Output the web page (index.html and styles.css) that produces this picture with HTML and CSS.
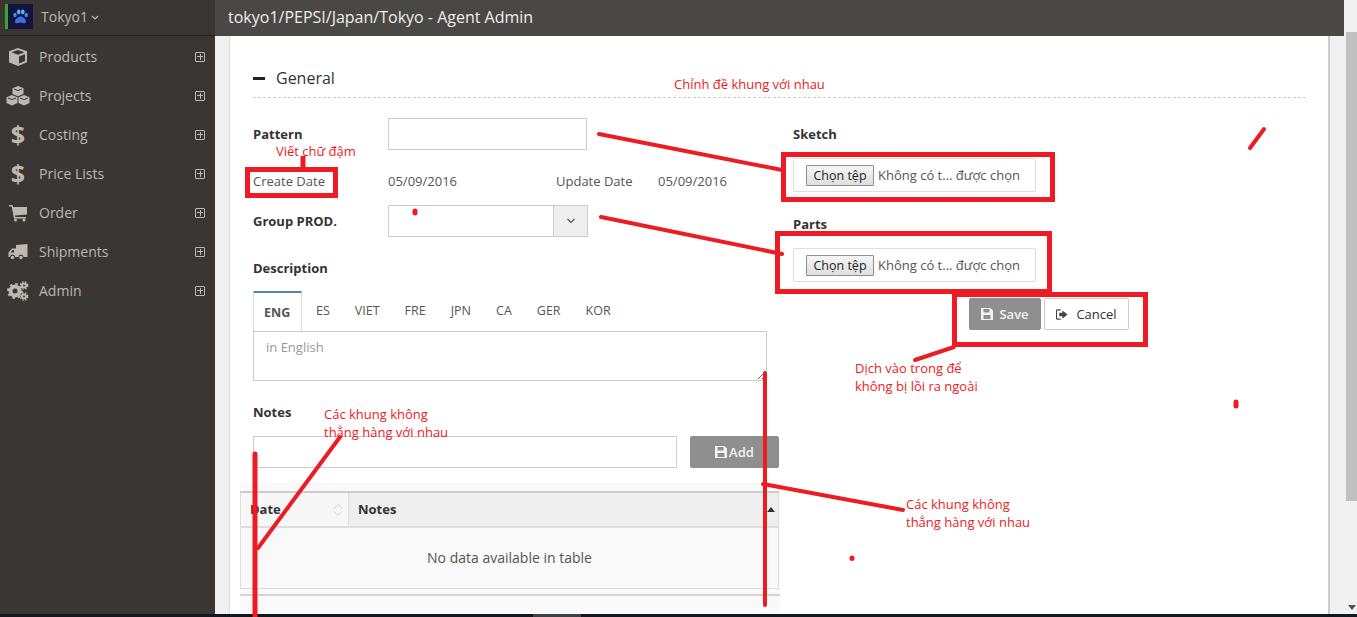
FILE: index.html
```html
<!DOCTYPE html>
<html lang="en">

<head>
    <meta charset="UTF-8">
    <meta name="viewport" content="width=device-width, initial-scale=1.0">
    <title>Agent Admin</title>
    <link rel="stylesheet" href="styles.css">
</head>

<body>
    <div id="window">
        <div id="app">
            <aside id="sidebar">
                <div class="brand">
                    <span class="brand-bar"></span>
                    <span class="brand-logo">
                        <svg viewBox="0 0 25 25" width="25" height="25">
                            <rect width="25" height="25" fill="#14123f"/>
                            <path d="M12.500 12.500c-2.500 0-5.500 2.800-5.500 5 0 1.800 1.500 2 2.800 1.700 1-.2 1.800-.6 2.700-.6s1.700.4 2.700.6c1.300.3 2.800.1 2.800-1.700 0-2.200-3-5-5.500-5z" fill="#3a6fe0"/>
                            <ellipse cx="7" cy="11" rx="1.700" ry="2.200" fill="#3f8fe8"/>
                            <ellipse cx="10.700" cy="8" rx="1.800" ry="2.400" fill="#57b4ef"/>
                            <ellipse cx="14.800" cy="8" rx="1.800" ry="2.400" fill="#57b4ef"/>
                            <ellipse cx="18.200" cy="11" rx="1.700" ry="2.200" fill="#3f8fe8"/>
                        </svg>
                    </span>
                    <span class="brand-name">Tokyo1</span>
                    <svg class="brand-caret" viewBox="0 0 8 5" width="8" height="5"><path d="M1 1l3 3 3-3" fill="none" stroke="#bdb8b2" stroke-width="1.200"/></svg>
                </div>
                <nav class="nav">
                    <a class="nav-item">
                        <span class="nav-icon">
                            <svg viewBox="0 0 20 20" width="20" height="20"><path d="M10 1l9 3.200v11L10 19l-9-3.800v-11zM3.500 5.200L10 7.800l6.500-2.600L10 3zM11 9.500v7l6-2.600V7.200z" fill="#bdb8b2" fill-rule="evenodd"/></svg>
                        </span>
                        <span class="nav-label">Products</span>
                        <span class="nav-plus"></span>
                    </a>
                    <a class="nav-item">
                        <span class="nav-icon">
                            <svg viewBox="0 0 24 20" width="24" height="20"><path d="M12 0l5.500 2.200V8L12 10.300 6.500 8V2.200zM6 9l5.500 2.200V17L6 19.500.500 17v-5.800zM18 9l5.500 2.200V17L18 19.500 12.500 17v-5.800z" fill="#bdb8b2"/><path d="M8 3l4 1.600L16 3M2 12l4 1.600 4-1.600M14 12l4 1.600 4-1.600" fill="none" stroke="#3a3633"/></svg>
                        </span>
                        <span class="nav-label">Projects</span>
                        <span class="nav-plus"></span>
                    </a>
                    <a class="nav-item">
                        <span class="nav-icon nav-dollar">$</span>
                        <span class="nav-label">Costing</span>
                        <span class="nav-plus"></span>
                    </a>
                    <a class="nav-item">
                        <span class="nav-icon nav-dollar">$</span>
                        <span class="nav-label">Price Lists</span>
                        <span class="nav-plus"></span>
                    </a>
                    <a class="nav-item">
                        <span class="nav-icon">
                            <svg viewBox="0 0 20 18" width="20" height="18"><path d="M1 1h3.500l.7 2H19v7.500L7 11.500l.3 1.500H18v1.500H6L3.600 2.500H1z" fill="#bdb8b2"/><circle cx="7.500" cy="16" r="1.500" fill="#bdb8b2"/><circle cx="16" cy="16" r="1.500" fill="#bdb8b2"/></svg>
                        </span>
                        <span class="nav-label">Order</span>
                        <span class="nav-plus"></span>
                    </a>
                    <a class="nav-item">
                        <span class="nav-icon">
                            <svg viewBox="0 0 20 16" width="20" height="16"><path d="M8 1l11-1q.5 0 .5.5V13h-4a2.500 2.500 0 0 0-5 0H7a2.500 2.500 0 0 0-5 0H.500V8.500L4 4.500h4zM2.500 8.500H6V6H4.500z" fill="#bdb8b2" fill-rule="evenodd"/><circle cx="4.500" cy="13.500" r="1.700" fill="#bdb8b2"/><circle cx="13" cy="13.500" r="1.700" fill="#bdb8b2"/></svg>
                        </span>
                        <span class="nav-label">Shipments</span>
                        <span class="nav-plus"></span>
                    </a>
                    <a class="nav-item">
                        <span class="nav-icon">
                            <svg viewBox="0 0 22 20" width="22" height="20">
                                <circle cx="8" cy="10" r="4.500" fill="none" stroke="#bdb8b2" stroke-width="4"/>
                                <circle cx="8" cy="10" r="7" fill="none" stroke="#bdb8b2" stroke-width="2" stroke-dasharray="2.500 3"/>
                                <circle cx="17" cy="4.500" r="2" fill="none" stroke="#bdb8b2" stroke-width="2"/>
                                <circle cx="17" cy="4.500" r="3.700" fill="none" stroke="#bdb8b2" stroke-width="1.400" stroke-dasharray="1.500 1.500"/>
                                <circle cx="17" cy="15.500" r="2" fill="none" stroke="#bdb8b2" stroke-width="2"/>
                                <circle cx="17" cy="15.500" r="3.700" fill="none" stroke="#bdb8b2" stroke-width="1.400" stroke-dasharray="1.500 1.500"/>
                            </svg>
                        </span>
                        <span class="nav-label">Admin</span>
                        <span class="nav-plus"></span>
                    </a>
                </nav>
            </aside>

            <div id="main">
                <header id="topbar">tokyo1/PEPSI/Japan/Tokyo - Agent Admin</header>
                <div id="content">
                    <section id="panel">
                        <div class="section-head">
                            <span class="section-dash"></span>
                            <span>General</span>
                        </div>

                        <div class="form-body">
                            <div class="col-left">
                                <div class="row row-pattern">
                                    <label class="field-label">Pattern</label>
                                    <input type="text" class="text-input pattern-input">
                                </div>
                                <div class="row row-dates">
                                    <span class="field-label plain">Create Date</span>
                                    <span class="date-value">05/09/2016</span>
                                    <span class="date-label">Update Date</span>
                                    <span class="date-value-end">05/09/2016</span>
                                </div>
                                <div class="row row-group">
                                    <label class="field-label">Group PROD.</label>
                                    <div class="select-box">
                                        <span class="select-value"></span>
                                        <span class="select-btn">
                                            <svg viewBox="0 0 10 6" width="10" height="6"><path d="M1.500 1l3.500 3.500L8.500 1" fill="none" stroke="#555" stroke-width="1.100"/></svg>
                                        </span>
                                    </div>
                                </div>

                                <div class="block-label desc-label">Description</div>
                                <ul class="tabs">
                                    <li class="tab active">ENG</li>
                                    <li class="tab">ES</li>
                                    <li class="tab">VIET</li>
                                    <li class="tab">FRE</li>
                                    <li class="tab">JPN</li>
                                    <li class="tab">CA</li>
                                    <li class="tab">GER</li>
                                    <li class="tab">KOR</li>
                                </ul>
                                <textarea class="desc-area" placeholder="in English"></textarea>

                                <div class="block-label notes-label">Notes</div>
                                <div class="notes-row">
                                    <input type="text" class="text-input notes-input">
                                    <button class="btn btn-gray btn-add">
                                        <svg viewBox="0 0 12 12" width="12" height="12"><path d="M0 0h9.500L12 2.500V12H0zM2.500 1v3.500h6V1zM2.500 7v4h7V7z" fill="#f3f3f3" fill-rule="evenodd"/></svg>
                                        Add
                                    </button>
                                </div>

                                <div class="table-wrap">
                                    <table class="data-table">
                                        <thead>
                                            <tr>
                                                <th class="th-date">
                                                    Date
                                                    <svg class="sort-both" viewBox="0 0 10 16" width="10" height="16"><path d="M1 6.500l4-4 4 4M1 9.500l4 4 4-4" fill="none" stroke="#cfcfcf"/></svg>
                                                </th>
                                                <th class="th-notes">
                                                    Notes
                                                    <span class="sort-up"></span>
                                                </th>
                                            </tr>
                                        </thead>
                                        <tbody>
                                            <tr>
                                                <td colspan="2">No data available in table</td>
                                            </tr>
                                        </tbody>
                                    </table>
                                    <div class="table-foot"></div>
                                </div>
                            </div>

                            <div class="col-right">
                                <div class="block-label">Sketch</div>
                                <div class="file-box">
                                    <button class="file-btn">Chọn tệp</button>
                                    <span class="file-name">Không có t... được chọn</span>
                                </div>
                                <div class="block-label parts-label">Parts</div>
                                <div class="file-box">
                                    <button class="file-btn">Chọn tệp</button>
                                    <span class="file-name">Không có t... được chọn</span>
                                </div>
                                <div class="actions">
                                    <button class="btn btn-gray btn-save">
                                        <svg viewBox="0 0 12 12" width="12" height="12"><path d="M0 0h9.500L12 2.500V12H0zM2.500 1v3.500h6V1zM2.500 7v4h7V7z" fill="#f3f3f3" fill-rule="evenodd"/></svg>
                                        Save
                                    </button>
                                    <button class="btn btn-white btn-cancel">
                                        <svg viewBox="0 0 13 12" width="12" height="11"><path d="M5 1H1.500Q.5 1 .5 2v8q0 1 1 1H5" fill="none" stroke="#444" stroke-width="1.300"/><path d="M3.500 4H7V1.500L12.500 6 7 10.500V8H3.500z" fill="#444"/></svg>
                                        Cancel
                                    </button>
                                </div>
                            </div>
                        </div>
                    </section>
                    <div id="gutter-right"></div>
                </div>
            </div>

            <div id="scrollbar">
                <div class="scroll-thumb"></div>
                <span class="scroll-down"></span>
            </div>
        </div>
        <div id="taskbar"><span class="task-active"></span></div>
    </div>

    <!-- review marks drawn on top of the screenshot -->
    <svg id="marks" viewBox="0 0 1357 617" width="1357" height="617">
        <g fill="none" stroke="#ed1c24" stroke-width="5">
            <rect x="247.500" y="169.500" width="88" height="26"/>
            <rect x="783.500" y="154.500" width="269" height="45"/>
            <rect x="777.500" y="233.500" width="272" height="58"/>
            <rect x="954.500" y="294.500" width="191" height="50"/>
        </g>
        <g fill="none" stroke="#ed1c24" stroke-width="4" stroke-linecap="round">
            <path d="M303 156v11" stroke-linecap="butt" stroke-width="5"/>
            <path d="M599 134L782 170"/>
            <path d="M601 217L782 254"/>
            <path d="M915 360L954 347"/>
            <path d="M255 454V617" stroke-width="5"/>
            <path d="M340 437L258 548"/>
            <path d="M765 373V605"/>
            <path d="M763 484L903 510"/>
            <path d="M1264 129L1250 148"/>
            <path d="M415 211v2" stroke-width="5"/>
            <path d="M1236 402v4" stroke-width="5"/>
            <path d="M852 558v.5" stroke-width="5"/>
        </g>
    </svg>
    <div class="note note-head">Chỉnh đề khung với nhau</div>
    <div class="note note-bold">Viết chữ đậm</div>
    <div class="note note-move">Dịch vào trong để<br>không bị lồi ra ngoài</div>
    <div class="note note-align-l">Các khung không<br>thẳng hàng với nhau</div>
    <div class="note note-align-r">Các khung không<br>thẳng hàng với nhau</div>
</body>

</html>
```

FILE: styles.css
```css
* {
    box-sizing: border-box;
}

html,
body {
    margin: 0;
    padding: 0;
    height: 100%;
    overflow: hidden;
}

body {
    font-family: 'Open Sans', Arial, sans-serif;
    font-size: 13px;
    color: #333;
    background: #f0f0f0;
    position: relative;
}

#window {
    display: flex;
    flex-direction: column;
    height: 617px;
}

#app {
    display: flex;
    flex: 1;
    min-height: 0;
}

/* sidebar */
#sidebar {
    width: 215px;
    flex-shrink: 0;
    background: #3a3633;
}

.brand {
    display: flex;
    align-items: center;
    height: 36px;
    padding: 4px 0 6px 5px;
    border-bottom: 1px solid #252321;
}

.brand-bar {
    width: 3px;
    height: 25px;
    background: #3aa62a;
}

.brand-logo {
    width: 25px;
    height: 25px;
    line-height: 0;
}

.brand-name {
    margin-left: 8px;
    font-size: 14px;
    color: #bdb8b2;
}

.brand-caret {
    margin-left: 3px;
    margin-top: 1px;
}

.nav {
    margin: 1px 0 0;
    padding: 0;
}

.nav-item {
    display: flex;
    align-items: center;
    height: 39px;
    padding-right: 10px;
    color: #bdb8b2;
    font-size: 14px;
}

.nav-icon {
    width: 36px;
    display: flex;
    justify-content: center;
    line-height: 0;
}

.nav-dollar {
    font-size: 25px;
    line-height: 25px;
    font-weight: 700;
}

.nav-label {
    flex: 1;
    margin-left: 3px;
}

.nav-plus {
    width: 10px;
    height: 10px;
    border: 1px solid #bdb8b2;
    border-radius: 1px;
    background:
        linear-gradient(#bdb8b2, #bdb8b2) center / 6px 1px no-repeat,
        linear-gradient(#bdb8b2, #bdb8b2) center / 1px 6px no-repeat;
}

/* main area */
#main {
    flex: 1;
    display: flex;
    flex-direction: column;
    min-width: 0;
}

#topbar {
    height: 36px;
    flex-shrink: 0;
    margin-right: 2px;
    padding-left: 13px;
    line-height: 34px;
    font-size: 16px;
    color: #eee;
    background: #4a4845;
}

#content {
    flex: 1;
    display: flex;
    min-height: 0;
    padding-left: 14px;
    background: #f0f0f0;
    overflow: hidden;
}

#panel {
    width: 1101px;
    flex-shrink: 0;
    padding: 29px 22px 0 23px;
    background: #fff;
    border-left: 1px solid #ddd;
    border-right: 2px solid #ccc;
}

#gutter-right {
    flex: 1;
}

.section-head {
    display: flex;
    align-items: center;
    height: 26px;
    font-size: 16px;
    color: #333;
}

.section-dash {
    width: 12px;
    height: 3px;
    margin-right: 11px;
    background: #222;
}

.form-body {
    display: flex;
    margin-top: 6px;
    padding-top: 20px;
    border-top: 1px dashed #ccc;
}

.col-left {
    width: 527px;
    flex-shrink: 0;
}

.col-right {
    margin-left: 13px;
    padding-top: 7px;
}

.row {
    display: flex;
    align-items: center;
}

.field-label {
    width: 135px;
    flex-shrink: 0;
    font-weight: 700;
    color: #333;
}

.field-label.plain {
    font-weight: 400;
    color: #555;
}

.row-dates {
    height: 18px;
    margin-top: 22px;
    color: #555;
}

.date-value {
    width: 168px;
}

.date-label {
    width: 102px;
}

.row-group {
    margin-top: 15px;
}

.text-input {
    height: 32px;
    padding: 6px 12px;
    border: 1px solid #ccc;
    background: #fff;
    outline: none;
}

.pattern-input {
    width: 199px;
}

.select-box {
    display: flex;
    width: 200px;
    height: 32px;
    border: 1px solid #ccc;
    background: #fff;
}

.select-value {
    flex: 1;
}

.select-btn {
    display: flex;
    align-items: center;
    justify-content: center;
    width: 34px;
    border-left: 1px solid #ccc;
    background: #eee;
}

.block-label {
    height: 18px;
    line-height: 18px;
    font-weight: 700;
    color: #333;
}

.desc-label {
    margin-top: 22px;
}

.tabs {
    display: flex;
    height: 40px;
    margin: 14px 0 0;
    padding: 0;
    list-style: none;
    font-size: 12.500px;
    color: #555;
}

.tab {
    padding: 0 12px;
    line-height: 39px;
    height: 40px;
    margin-right: 1px;
}

.tab.active {
    width: 49px;
    padding: 0 10px;
    margin-right: 2px;
    font-weight: 700;
    background: #fff;
    border: 1px solid #ddd;
    border-top: 2px solid #57889c;
    border-bottom: none;
    position: relative;
    z-index: 1;
}

.desc-area {
    display: block;
    width: 514px;
    height: 50px;
    padding: 6px 12px;
    border: 1px solid #ccc;
    font-family: inherit;
    font-size: 13px;
    outline: none;
}

.desc-area::placeholder {
    color: #999;
}

.notes-label {
    margin-top: 22px;
}

.notes-row {
    display: flex;
    margin-top: 15px;
}

.notes-input {
    width: 424px;
}

.btn {
    display: inline-flex;
    align-items: center;
    justify-content: center;
    height: 32px;
    border-radius: 2px;
    font-family: inherit;
    font-size: 13px;
    cursor: pointer;
}

.btn-gray {
    border: 1px solid #8d8d8d;
    background: #8f8f8f;
    color: #f3f3f3;
    font-weight: 600;
}

.btn-white {
    border: 1px solid #ccc;
    background: #fff;
    color: #333;
}

.btn-add {
    width: 89px;
    margin-left: 13px;
    gap: 2px;
}

/* table */
.table-wrap {
    width: 540px;
    height: 131px;
    margin: 15px 0 0 -13px;
    padding-top: 8px;
    background: #f9f9f9;
}

.data-table {
    width: 539px;
    border-collapse: collapse;
    border: 1px solid #ddd;
    border-top: 2px solid #ccc;
    table-layout: fixed;
}

.data-table th {
    position: relative;
    height: 35px;
    padding: 0 9px 2px;
    text-align: left;
    font-weight: 700;
    color: #333;
    border-bottom: 2px solid #ddd;
}

.th-date {
    width: 108px;
    background: #f7f7f7;
    border-right: 1px solid #ddd;
}

.th-notes {
    background: #eee;
}

.sort-both {
    position: absolute;
    right: 5px;
    top: 9px;
}

.sort-up {
    position: absolute;
    right: 3px;
    top: 14px;
    border: 4px solid transparent;
    border-top: none;
    border-bottom: 5px solid #333;
}

.data-table td {
    height: 61px;
    text-align: center;
    font-size: 14px;
    color: #555;
}

.table-foot {
    height: 2px;
    margin-top: 5px;
    background: #d4d4d4;
}

/* file inputs */
.file-box {
    display: flex;
    align-items: center;
    width: 243px;
    height: 34px;
    margin-top: 15px;
    padding-left: 12px;
    border: 1px solid #ddd;
    border-radius: 2px;
}

.file-btn {
    height: 21px;
    width: 68px;
    padding: 0;
    border: 1px solid #8e8e8e;
    border-radius: 1px;
    background: linear-gradient(#f6f6f6, #dedede);
    font-family: inherit;
    font-size: 12.500px;
    color: #222;
}

.file-name {
    margin-left: 4px;
    font-size: 13px;
    color: #555;
}

.parts-label {
    margin-top: 23px;
}

.actions {
    display: flex;
    gap: 3px;
    margin: 16px 0 0 176px;
}

.btn-save {
    width: 72px;
    gap: 6px;
}

.btn-cancel {
    width: 85px;
    gap: 8px;
}

/* scrollbar and windows taskbar */
#scrollbar {
    position: relative;
    width: 11px;
    flex-shrink: 0;
    background: #f0f0f0;
}

.scroll-thumb {
    height: 469px;
    margin-top: 32px;
    background: #c0c0c0;
}

.scroll-down {
    position: absolute;
    left: 2px;
    bottom: 4px;
    border: 4px solid transparent;
    border-bottom: none;
    border-top: 5px solid #505050;
}

#taskbar {
    height: 3px;
    flex-shrink: 0;
    padding-left: 533px;
    background: #0f1a20;
}

.task-active {
    display: block;
    width: 48px;
    height: 3px;
    background: #3a4248;
}

/* review marks */
#marks {
    position: absolute;
    left: 0;
    top: 0;
    pointer-events: none;
}

.note {
    position: absolute;
    font-size: 13px;
    line-height: 18px;
    color: #ed1c24;
    white-space: nowrap;
}

.note-head {
    left: 674px;
    top: 75px;
}

.note-bold {
    left: 276px;
    top: 142px;
}

.note-move {
    left: 855px;
    top: 359px;
}

.note-align-l {
    left: 324px;
    top: 405px;
}

.note-align-r {
    left: 906px;
    top: 495px;
}
```
